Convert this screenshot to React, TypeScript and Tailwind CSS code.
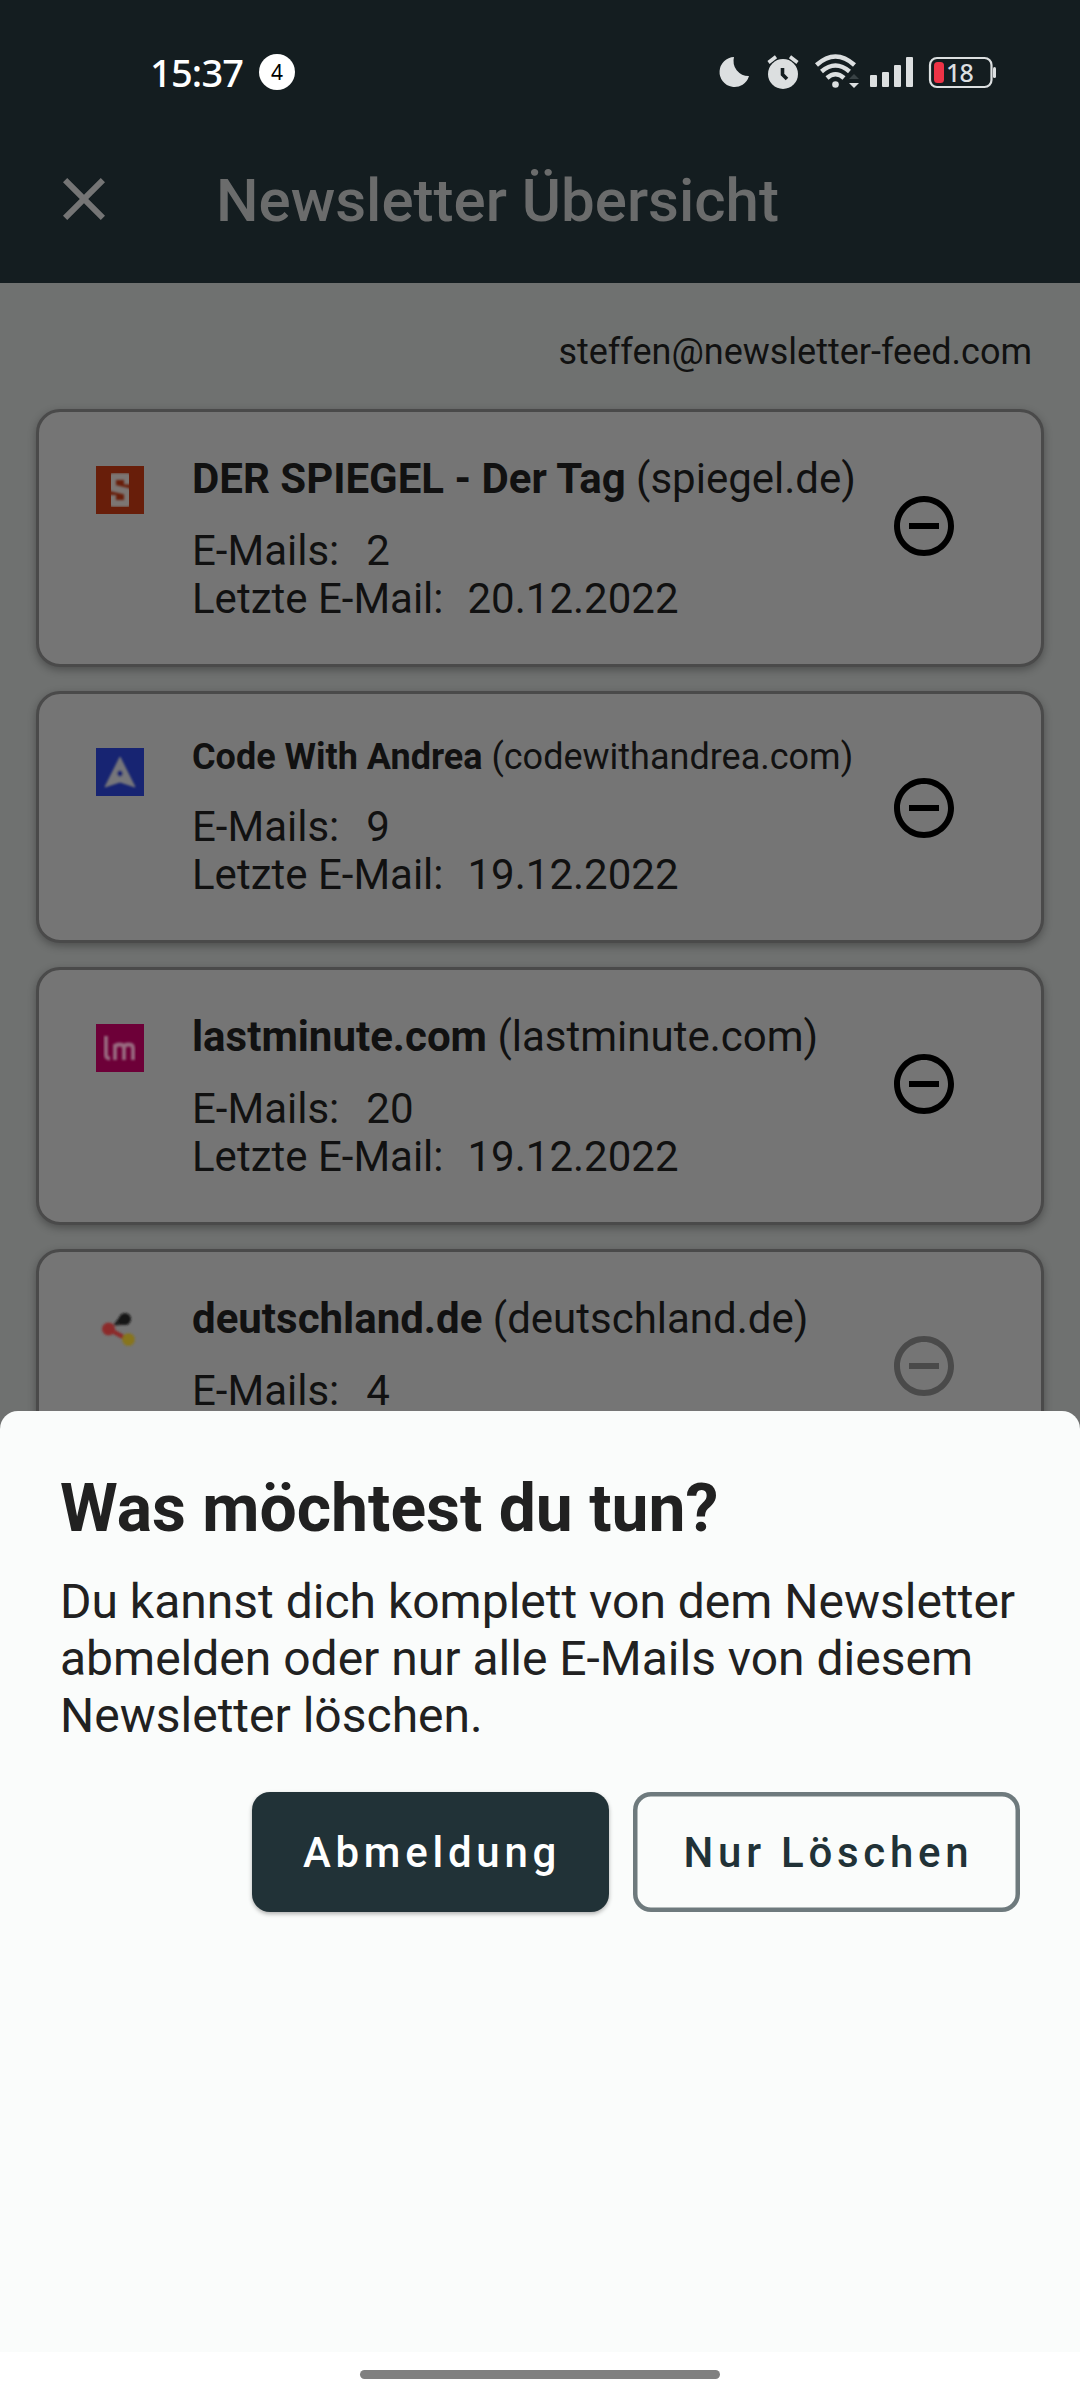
import React from "react";

type Item = {
  name: string;
  domain: string;
  count: number;
  date: string;
  small?: boolean;
  disabled?: boolean;
  logo: React.ReactNode;
};

const SpiegelLogo = () => (
  <svg className="size-12" viewBox="0 0 48 48">
    <rect width="48" height="48" fill="#681e0a" />
    <g fill="none" stroke="#7b7572" strokeWidth="7" strokeLinejoin="round" filter="url(#soft)">
      <path d="M31.500 18.500V10.500H16.500V22L31.500 25.500V37.500H16.500V29" />
    </g>
  </svg>
);

const AndreaLogo = () => (
  <svg className="size-12" viewBox="0 0 48 48">
    <rect width="48" height="48" fill="#172472" />
    <g filter="url(#soft)">
      <path d="M24 9L39 39L24 34L9 39Z" fill="#76767a" stroke="#76767a" strokeWidth="1" />
      <ellipse cx="24" cy="25.500" rx="2.600" ry="3" fill="#172472" />
    </g>
  </svg>
);

const LastminuteLogo = () => (
  <svg className="size-12" viewBox="0 0 48 48">
    <rect width="48" height="48" fill="#6d0038" />
    <g fill="none" stroke="#98697f" strokeWidth="3.800" filter="url(#soft)">
      <path d="M10 12V31Q10 34.500 14 34.500" />
      <path d="M19 36V20M19 24Q19 20.500 23.500 20.500Q28 20.500 28 24V36M28 24Q28 20.500 32.500 20.500Q37 20.500 37 24V36" />
    </g>
  </svg>
);

const DeutschlandLogo = () => (
  <svg className="size-12" viewBox="0 0 48 48">
    <g filter="url(#soft)">
      <path d="M17 19.500L25 9L32 18.500Z" fill="#1c1a1a" />
      <circle cx="29" cy="13" r="6" fill="#151515" />
      <path d="M12.500 23L30 32.500" stroke="#8c2c2c" strokeWidth="4.500" />
      <circle cx="12.500" cy="23" r="6.500" fill="#8c2c2c" />
      <circle cx="32.500" cy="33.500" r="6.300" fill="#87741c" />
    </g>
  </svg>
);

const items: Item[] = [
  { name: "DER SPIEGEL - Der Tag", domain: "spiegel.de", count: 2, date: "20.12.2022", logo: <SpiegelLogo /> },
  { name: "Code With Andrea", domain: "codewithandrea.com", count: 9, date: "19.12.2022", small: true, logo: <AndreaLogo /> },
  { name: "lastminute.com", domain: "lastminute.com", count: 20, date: "19.12.2022", logo: <LastminuteLogo /> },
  { name: "deutschland.de", domain: "deutschland.de", count: 4, date: "19.12.2022", disabled: true, logo: <DeutschlandLogo /> },
];

const StatusBar = () => (
  <div className="flex h-36 items-center justify-between pl-[150px] pr-[83px]">
    <div className="flex items-center">
      <span className="w-[109px] whitespace-nowrap font-['Noto_Sans'] text-[38px] font-medium leading-none tracking-[-0.8px] text-white">15:37</span>
      <span className="flex size-9 items-center justify-center rounded-full bg-white font-['Noto_Sans'] text-[21px] leading-none text-black">4</span>
    </div>
    <svg className="h-[36px] w-[280px]" viewBox="717 54 280 36" fill="#dcdfe0">
      <path d="M734 57A15 15 0 1 0 749 76A15 15 0 0 1 734 57Z" />
      <circle cx="783" cy="74" r="15" />
      <path d="M768.500 62.500L776 56.800M797.500 62.500L790 56.800" stroke="#dcdfe0" strokeWidth="3.600" />
      <path d="M782.500 68V74.500L787 79" fill="none" stroke="#141d20" strokeWidth="3.600" />
      <g fill="none" stroke="#dcdfe0" strokeWidth="4.500">
        <path d="M816.500 65Q835.500 48 854.500 65" />
        <path d="M821.500 71.500Q835.500 59.500 849.500 71.500" />
        <path d="M827 78Q835.500 70.500 844 78" />
      </g>
      <circle cx="835.500" cy="84.500" r="3.300" />
      <path d="M849 79H859L854 74Z" fill="#394245" />
      <path d="M849 83H859L854 88Z" />
      <rect x="870" y="75" width="7" height="12" rx="1" />
      <rect x="882" y="72" width="7" height="15" rx="1" />
      <rect x="894" y="65" width="7" height="22" rx="1" />
      <rect x="906" y="57" width="7" height="30" rx="1" />
      <rect x="930" y="58" width="61.500" height="29" rx="7" fill="none" stroke="#dcdfe0" strokeWidth="2.200" />
      <rect x="934" y="62" width="10" height="21" rx="3.500" fill="#ee3346" />
      <rect x="993" y="67" width="3" height="11" rx="1.500" />
      <text x="946" y="81.500" fontFamily="Noto Sans" fontWeight="500" fontSize="25" letterSpacing="-.7">18</text>
    </svg>
  </div>
);

const MinusIcon = ({ disabled }: { disabled?: boolean }) => (
  <svg className={disabled ? "size-[72px] text-[#4a4a4a]" : "size-[72px] text-black"} viewBox="0 0 24 24" fill="currentColor">
    <path d="M7 11v2h10v-2H7zm5-9C6.480 2 2 6.480 2 12s4.480 10 10 10 10-4.480 10-10S17.520 2 12 2zm0 18c-4.410 0-8-3.590-8-8s3.590-8 8-8 8 3.590 8 8-3.590 8-8 8z" />
  </svg>
);

const Card = ({ item }: { item: Item }) => (
  <article className="flex items-start rounded-[24px] border-[3px] border-[#4a4a4a] bg-[#757575] pb-[41px] pl-[57px] shadow-[0_3px_9px_rgba(0,0,0,0.3)]">
    <div className="mt-[54px] w-[96px] shrink-0">{item.logo}</div>
    <div className="w-[669px] shrink-0 whitespace-nowrap pt-[42px]">
      <h2 className={item.small ? "text-[36px] leading-[43px]" : "text-[42px] leading-[49px]"}>
        <b className="font-bold">{item.name}</b> ({item.domain})
      </h2>
      <dl className="mt-[24px] text-[42px] leading-[48px]">
        <div className="flex gap-[27px]"><dt>E-Mails:</dt><dd>{item.count}</dd></div>
        <div className="flex gap-[24px]"><dt>Letzte E-Mail:</dt><dd>{item.date}</dd></div>
      </dl>
    </div>
    <button className="ml-[27px] mt-[78px]" aria-label="Abmelden"><MinusIcon disabled={item.disabled} /></button>
  </article>
);

export default function App() {
  return (
    <div className="relative h-[2400px] w-[1080px] overflow-hidden bg-[#6f7170] font-[Roboto,sans-serif] text-[#111]">
      <svg className="absolute size-0">
        <filter id="soft"><feGaussianBlur stdDeviation="0.9" /></filter>
      </svg>
      <header className="h-[283px] bg-[#141d20]">
        <StatusBar />
        <div className="flex h-[111px] items-center pl-[48px]">
          <svg className="mb-px size-[72px] text-[#757575]" viewBox="0 0 24 24" fill="currentColor">
            <path d="M19 6.410L17.590 5 12 10.590 6.410 5 5 6.410 10.590 12 5 17.590 6.410 19 12 13.410 17.590 19 19 17.590 13.410 12z" />
          </svg>
          <h1 className="ml-24 pt-[2px] text-[60px] font-medium leading-[70px] text-[#6b6c6c]">Newsletter Übersicht</h1>
        </div>
      </header>
      <p className="mr-12 mt-[48px] text-right text-[36px] leading-[43px]">steffen@newsletter-feed.com</p>
      <main className="mx-9 mt-[35px] flex flex-col gap-6">
        {items.map((item) => <Card key={item.name} item={item} />)}
      </main>
      <section className="absolute inset-x-0 bottom-0 flex h-[989px] flex-col rounded-t-[18px] bg-[#fafcfb] text-[#212121]">
        <div className="flex-1 px-[60px] pt-[59px]">
          <h2 className="text-[66px] font-bold leading-[77px]">Was möchtest du tun?</h2>
          <p className="mt-[26px] whitespace-nowrap text-[48px] leading-[57px]">
            Du kannst dich komplett von dem Newsletter<br />abmelden oder nur alle E-Mails von diesem<br />Newsletter löschen.
          </p>
          <div className="mt-[48px] flex justify-end gap-6 text-[42px] font-medium tracking-[4.75px]">
            <button className="h-[120px] w-[357px] rounded-[18px] bg-[#213237] pl-[3px] text-white shadow-[0_2px_4px_rgba(0,0,0,0.3)]">Abmeldung</button>
            <button className="h-[120px] w-[387px] rounded-[18px] pl-[4px] text-[#213237] shadow-[inset_0_0_0_4.5px_#6e7a7d]">Nur Löschen</button>
          </div>
        </div>
        <div className="flex h-[48px] items-start justify-center bg-white pt-[18px]">
          <div className="h-[9px] w-[360px] rounded-full bg-[#808080]" />
        </div>
      </section>
    </div>
  );
}
